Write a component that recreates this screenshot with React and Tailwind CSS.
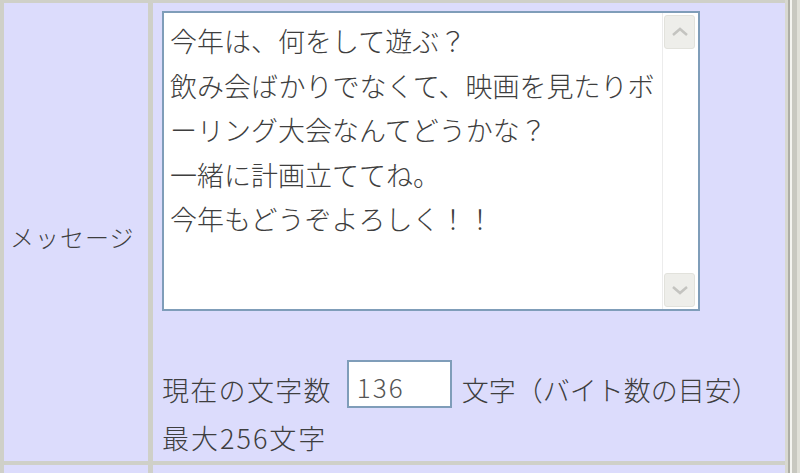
import React from "react";

const FONT = { fontFamily: '"MS PGothic", "Noto Sans CJK JP", sans-serif' };

const LINES = [
  "今年は、何をして遊ぶ？",
  "飲み会ばかりでなくて、映画を見たりボ",
  "ーリング大会なんてどうかな？",
  "一緒に計画立ててね。",
  "今年もどうぞよろしく！！",
];

function ScrollButton({ up }) {
  return (
    <div className="flex h-[34px] w-[31px] items-center justify-center rounded-[3px] border border-[#e2e2dc] bg-[#eeeeea]">
      <svg width="18" height="10" viewBox="0 0 18 10">
        <path
          d={up ? "M2 8 L9 2 L16 8" : "M2 2 L9 8 L16 2"}
          fill="none"
          stroke="#c4c4c0"
          strokeWidth="2.5"
        />
      </svg>
    </div>
  );
}

export default function App() {
  return (
    <div className="flex h-[473px] w-[800px] overflow-hidden bg-[#cfd0c8] font-light text-[#3e3e3e]" style={FONT}>
      <div className="flex flex-1 flex-col gap-[4px] pl-[4px] pt-[3px]">
        <div className="flex h-[458px] gap-[5px]">
          <div className="flex w-[144px] items-center bg-[#dcdcfc] pl-[6px] pt-[10px] text-[24px] tracking-[1px]">
            メッセージ
          </div>

          <div className="flex flex-1 flex-col bg-[#dcdcfc] pl-[9px] pt-[8px]">
            <div className="flex h-[300px] w-[538px] border-2 border-[#7f9db9] bg-white">
              <div className="flex-1 pl-[6px] pt-[6px] text-[27px] leading-[44.5px]">
                {LINES.map((l) => (
                  <div key={l} className="whitespace-nowrap">
                    {l}
                  </div>
                ))}
              </div>
              <div className="flex w-[36px] flex-col justify-between border-l border-[#ececec] py-[2px] pl-[1px]">
                <ScrollButton up />
                <ScrollButton />
              </div>
            </div>

            <div className="mt-[49px] flex h-[48px] items-end text-[27px]">
              <span className="leading-[36px] tracking-[1.3px]">現在の文字数</span>
              <div className="ml-[15px] flex h-[48px] w-[105px] items-center border-2 border-[#7f9db9] bg-white pl-[8px] pt-[4px] text-[26px] tracking-[2px] text-[#555]">
                136
              </div>
              <span className="ml-[10px] leading-[36px]">文字（バイト数の目安）</span>
            </div>
            <div className="mt-[12px] text-[27px] leading-[36px] tracking-[2px]">
              最大256文字
            </div>
          </div>
        </div>

        <div className="flex flex-1 gap-[5px]">
          <div className="w-[144px] bg-[#dcdcfc]" />
          <div className="flex-1 bg-[#dcdcfc]" />
        </div>
      </div>

      <div className="flex w-[15px]">
        <div className="w-[3px] bg-[#d8d8d0]" />
        <div className="w-[2px] bg-[#aeaea6]" />
        <div className="w-[2px] bg-[#f4f4f0]" />
        <div className="w-[5px] bg-[#c8c8c0]" />
        <div className="flex-1 bg-[#e0e0d8]" />
      </div>
    </div>
  );
}
